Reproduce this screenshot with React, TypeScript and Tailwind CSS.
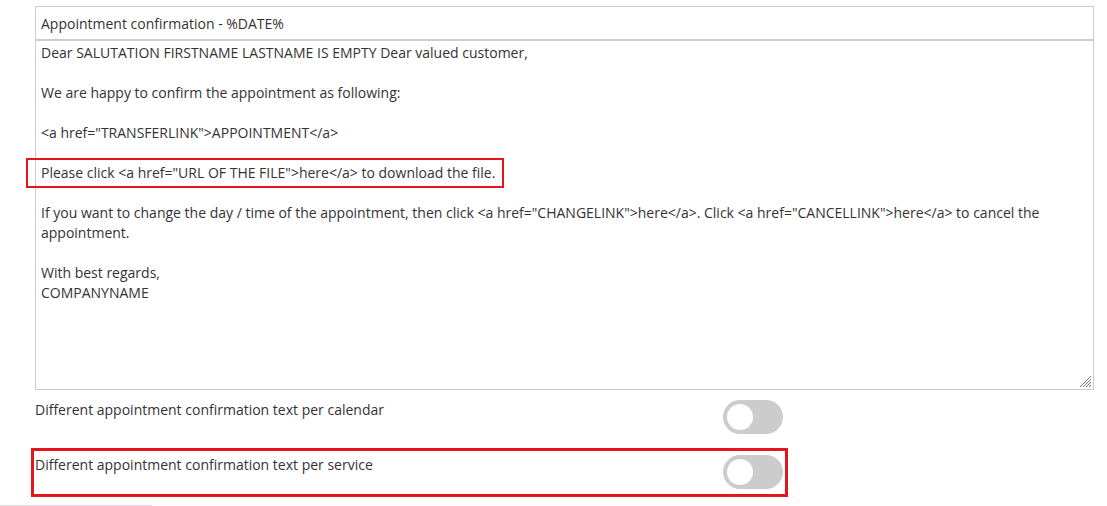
import React from "react";

const lines: string[] = [
  "Dear SALUTATION FIRSTNAME LASTNAME IS EMPTY Dear valued customer,",
  "",
  "We are happy to confirm the appointment as following:",
  "",
  '<a href="TRANSFERLINK">APPOINTMENT</a>',
  "",
  'Please click <a href="URL OF THE FILE">here</a> to download the file.',
  "",
  'If you want to change the day / time of the appointment, then click <a href="CHANGELINK">here</a>. Click <a href="CANCELLINK">here</a> to cancel the',
  "appointment.",
  "",
  "With best regards,",
  "COMPANYNAME",
];

function Toggle() {
  return (
    <div className="relative h-[34px] w-[60px] shrink-0 rounded-full bg-[#cccccc]">
      <div className="absolute left-[4px] top-[4px] h-[26px] w-[26px] rounded-full bg-white" />
    </div>
  );
}

export default function App() {
  return (
    <div
      className="relative h-[506px] w-[1107px] overflow-hidden bg-white text-[14px] text-[#333333]"
      style={{ fontFamily: '"Open Sans", "Liberation Sans", sans-serif' }}
    >
      <div className="ml-[35px] mt-[6px] flex w-[1059px] flex-col">
        <div className="flex h-[34px] items-center border border-[#cccccc] pl-[5px]">
          Appointment confirmation - %DATE%
        </div>
        <div className="relative h-[350px] border border-[#cccccc] pl-[5px] pt-[2px] leading-[20px]">
          {lines.map((l, i) => (
            <div key={i} className="h-[20px] whitespace-pre">
              {l}
            </div>
          ))}
          <svg
            className="absolute bottom-[1px] right-[1px]"
            width="13"
            height="13"
            viewBox="0 0 13 13"
          >
            <line x1="12" y1="1" x2="1" y2="12" stroke="#777" strokeWidth="1" />
            <line x1="12" y1="4" x2="4" y2="12" stroke="#777" strokeWidth="1" />
            <line x1="12" y1="7" x2="7" y2="12" stroke="#777" strokeWidth="1" />
            <line x1="12" y1="10" x2="10" y2="12" stroke="#777" strokeWidth="1" />
          </svg>
        </div>
        <div className="mt-[10px] flex items-start">
          <div className="w-[688px] leading-[20px]">Different appointment confirmation text per calendar</div>
          <Toggle />
        </div>
        <div className="mt-[21px] flex items-start">
          <div className="w-[688px] leading-[20px]">Different appointment confirmation text per service</div>
          <Toggle />
        </div>
      </div>

      <div className="pointer-events-none absolute left-[26px] top-[158px] h-[30px] w-[478px] border-2 border-[#e3161f]" />
      <div className="pointer-events-none absolute left-[31px] top-[448px] h-[49px] w-[757px] border-[3px] border-[#e3161f]" />
      <div className="absolute left-0 top-[505px] h-[1px] w-[152px] bg-[#dddddd]" />
    </div>
  );
}
